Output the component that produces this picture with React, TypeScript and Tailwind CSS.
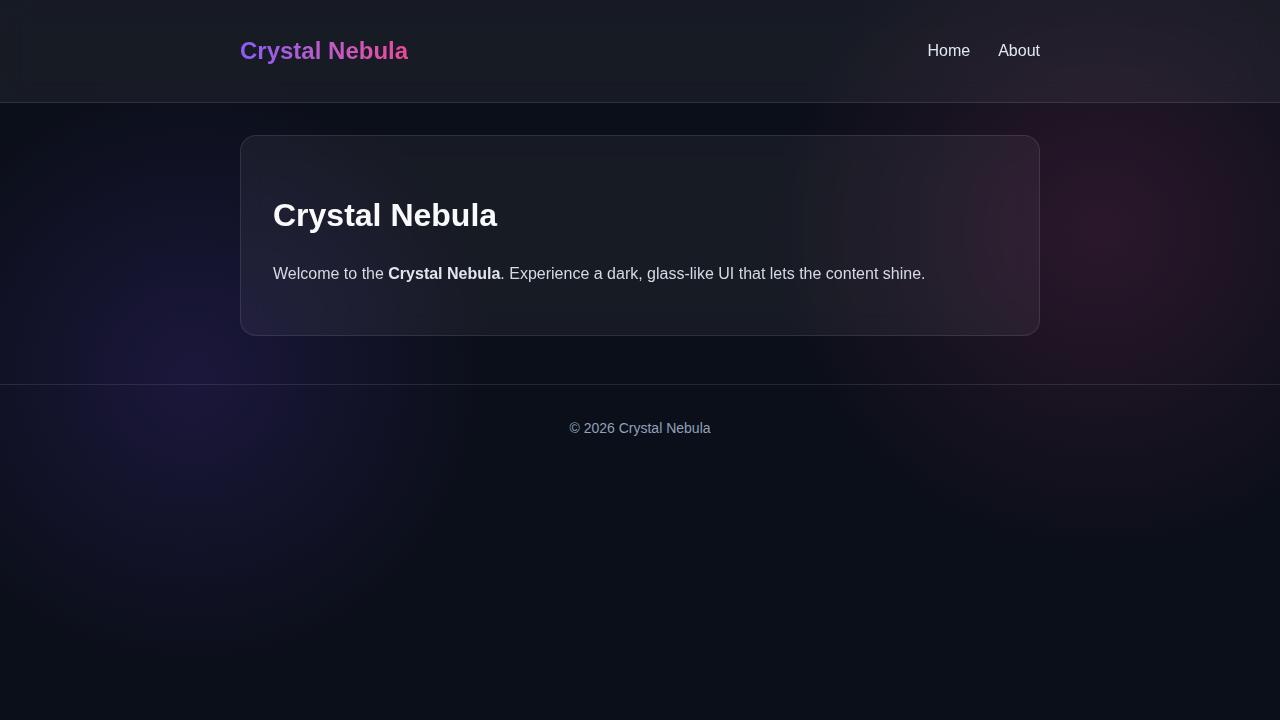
import React from "react";

const navLinks = ["Home", "About"];

const App: React.FC = () => {
  return (
    <div
      className="min-h-screen bg-[#0b0f19] bg-[radial-gradient(circle_at_15%_52%,rgba(96,58,210,0.19),transparent_26%),radial-gradient(circle_at_86%_32%,rgba(236,72,153,0.14),transparent_27%)] text-slate-200"
      style={{ fontFamily: '"Liberation Sans", Arial, sans-serif' }}
    >
      <header className="border-b border-white/10 bg-white/5 backdrop-blur-md">
        <div className="mx-auto flex h-[102px] max-w-[800px] items-center justify-between">
          <a
            href="#"
            className="bg-linear-to-r from-[#8b5cf6] to-[#ec4899] bg-clip-text text-2xl font-bold text-transparent"
          >
            Crystal Nebula
          </a>
          <nav className="flex gap-7 text-base text-slate-200">
            {navLinks.map((link) => (
              <a key={link} href="#" className="hover:text-white">
                {link}
              </a>
            ))}
          </nav>
        </div>
      </header>

      <main className="mx-auto max-w-[800px] pt-8 pb-12">
        <section className="rounded-2xl border border-white/10 bg-white/5 px-8 pt-[60px] pb-[48px] backdrop-blur-md">
          <h1 className="text-[32px] leading-[38px] font-bold text-slate-50">
            Crystal Nebula
          </h1>
          <p className="mt-[27px] text-base leading-[26px] text-[#d6dae3]">
            Welcome to the <strong className="font-bold text-[#e2e5ec]">Crystal Nebula</strong>.
            Experience a dark, glass-like UI that lets the content shine.
          </p>
        </section>
      </main>

      <footer className="border-t border-white/10 pt-[33px] pb-8 text-center text-sm leading-5 text-slate-400">
        © 2026 Crystal Nebula
      </footer>
    </div>
  );
};

export default App;
